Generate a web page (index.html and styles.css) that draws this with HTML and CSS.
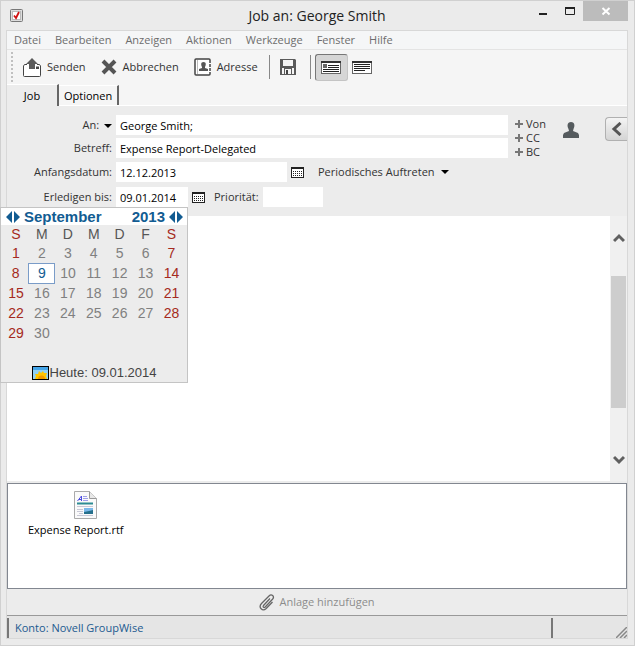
FILE: index.html
```html
<!DOCTYPE html>
<html lang="de">
<head>
  <meta charset="UTF-8">
  <title>Job an: George Smith</title>
  <link rel="stylesheet" href="styles.css">
</head>
<body>
<div class="window">
  <header class="titlebar">
    <svg class="app-icon" width="13" height="13" viewBox="0 0 13 13">
      <rect x=".5" y=".5" width="12" height="12" rx="1" fill="#ddd" stroke="#777"/>
      <rect x="2.5" y="2.5" width="8" height="8" fill="#fff" stroke="#bbb"/>
      <path d="M4 6.5l2 2.5 3-6" fill="none" stroke="#d01010" stroke-width="1.8"/>
    </svg>
    <h1>Job an: George Smith</h1>
    <div class="win-buttons">
      <button class="win-btn" aria-label="Minimieren"><svg width="12" height="12" viewBox="0 0 12 12"><path d="M2 9h8" stroke="#222" stroke-width="2"/></svg></button>
      <button class="win-btn" aria-label="Maximieren"><svg width="12" height="12" viewBox="0 0 12 12"><path d="M1.500 3v6.500h9V3" fill="none" stroke="#222"/><path d="M1 3h10" stroke="#222" stroke-width="2"/></svg></button>
      <button class="win-btn win-close" aria-label="Schließen"><svg width="10" height="10" viewBox="0 0 10 10"><path d="M1.500 2l7 6.500M8.500 2l-7 6.500" stroke="#fff" stroke-width="2"/></svg></button>
    </div>
  </header>

  <div class="frame">
    <nav class="menubar">
      <button>Datei</button>
      <button>Bearbeiten</button>
      <button>Anzeigen</button>
      <button>Aktionen</button>
      <button>Werkzeuge</button>
      <button>Fenster</button>
      <button>Hilfe</button>
    </nav>

    <div class="toolbar">
      <span class="grip"></span>
      <button class="tool">
        <svg width="18" height="20" viewBox="0 0 18 20">
          <path d="M4 7.500H1.500L.5 9v9.500q0 1 1 1h15q1 0 1-1V9l-1-1.500H14" fill="#fff" stroke="#444"/>
          <path d="M9 1L3 7h3v5h6V7h3z" fill="#5a5a5a"/>
          <path d="M13 9.500h3v2.500h-3z" fill="#444"/>
        </svg>
        Senden
      </button>
      <button class="tool">
        <svg width="16" height="16" viewBox="0 0 16 16"><path d="M2 2l12 12M14 2L2 14" stroke="#555" stroke-width="4"/></svg>
        Abbrechen
      </button>
      <button class="tool">
        <svg width="17" height="18" viewBox="0 0 17 18">
          <rect x="1" y="1" width="15" height="16" rx="1" fill="#fff" stroke="#444" stroke-width="1.500"/>
          <path d="M3.500 2v14" stroke="#bbb"/>
          <path d="M9.500 4c3 0 2.500 3 1.500 5v1l3 1v2H5v-2l3-1V9C7 7 6.500 4 9.500 4z" fill="#555"/>
          <path d="M16 5v1M16 9v1M16 13v1" stroke="#fff" stroke-width="2"/>
        </svg>
        Adresse
      </button>
      <span class="tool-sep"></span>
      <button class="tool tool-icon" aria-label="Speichern">
        <svg width="16" height="16" viewBox="0 0 16 16">
          <path d="M0 0h15l1 1v15H0z" fill="#5a5a5a"/>
          <path d="M3 1h10v6H3zM2 9h12v6H2z" fill="#f5f5f5"/>
          <path d="M4 9h8v7H4z" fill="#5a5a5a"/>
          <path d="M5 10h6v5H5z" fill="#f5f5f5"/>
          <path d="M6 11h2v4H6z" fill="#444"/>
        </svg>
      </button>
      <span class="tool-sep"></span>
      <button class="tool tool-icon tool-active" aria-label="HTML-Ansicht">
        <svg width="20" height="13" viewBox="0 0 20 13">
          <rect x=".5" y=".5" width="19" height="12" fill="#fff" stroke="#666"/>
          <path d="M0 1h20" stroke="#333" stroke-width="2"/>
          <path d="M2 3h4v4H2z" fill="#666"/>
          <path d="M7 4.500h11M7 6.500h11M2 8.500h16M2 10.500h16" stroke="#222"/>
        </svg>
      </button>
      <button class="tool tool-icon" aria-label="Textansicht">
        <svg width="20" height="13" viewBox="0 0 20 13">
          <rect x=".5" y=".5" width="19" height="12" fill="#fff" stroke="#666"/>
          <path d="M0 1h20" stroke="#333" stroke-width="2"/>
          <path d="M2 3.500h16M2 5.500h16M2 7.500h16M2 9.500h11" stroke="#222"/>
        </svg>
      </button>
    </div>

    <div class="tabs" role="tablist">
      <button class="tab tab-active" role="tab" aria-selected="true">Job</button>
      <button class="tab" role="tab" aria-selected="false">Optionen</button>
    </div>

    <main class="job">
      <form class="fields">
        <div class="people">
          <div class="people-fields">
            <div class="row">
              <label for="to">An: <i class="caret"></i></label>
              <input id="to" type="text" value="George Smith;">
            </div>
            <div class="row">
              <label for="subject">Betreff:</label>
              <input id="subject" type="text" value="Expense Report-Delegated">
            </div>
          </div>
          <div class="add-list">
            <button type="button"><i class="plus"></i>Von</button>
            <button type="button"><i class="plus"></i>CC</button>
            <button type="button"><i class="plus"></i>BC</button>
          </div>
          <svg class="person" width="16" height="16" viewBox="0 0 16 16"><path d="M8 0c4 0 4 4 2.500 7L10 9l5 2 1 2v3H0v-3l1-2 5-2-.5-2C4 4 4 0 8 0z" fill="#555b5e"/></svg>
          <button type="button" class="collapse" aria-label="Einblenden">
            <svg width="11" height="14" viewBox="0 0 11 14"><path d="M9.500 1L3 7l6.500 6" fill="none" stroke="#555" stroke-width="3"/></svg>
          </button>
        </div>

        <div class="dates">
          <div class="row">
            <label for="start">Anfangsdatum:</label>
            <input id="start" class="start" type="text" value="12.12.2013">
            <button type="button" class="cal-btn" aria-label="Kalender">
              <svg width="13" height="11" viewBox="0 0 13 11"><rect x=".5" y=".5" width="12" height="10" fill="#fff" stroke="#222"/><path d="M0 1.500h13" stroke="#222"/><path d="M2 4.500h9M2 6.500h9M2 8.500h9" stroke="#222" stroke-dasharray="1 1"/></svg>
            </button>
            <button type="button" class="recur">Periodisches Auftreten <i class="caret"></i></button>
          </div>
          <div class="row">
            <label for="due">Erledigen bis:</label>
            <div class="due">
              <input id="due" type="text" value="09.01.2014">
              <div class="calendar">
                <div class="cal-head">
                  <svg width="14" height="12" viewBox="0 0 14 12"><path d="M6 0v12L0 6zM8 0v12l6-6z" fill="#125c92"/></svg>
                  <strong>September</strong>
                  <strong class="year">2013</strong>
                  <svg width="14" height="12" viewBox="0 0 14 12"><path d="M6 0v12L0 6zM8 0v12l6-6z" fill="#125c92"/></svg>
                </div>
                <table>
                  <thead>
                    <tr><th>S</th><th>M</th><th>D</th><th>M</th><th>D</th><th>F</th><th>S</th></tr>
                  </thead>
                  <tbody>
                    <tr><td>1</td><td>2</td><td>3</td><td>4</td><td>5</td><td>6</td><td>7</td></tr>
                    <tr><td>8</td><td class="selected">9</td><td>10</td><td>11</td><td>12</td><td>13</td><td>14</td></tr>
                    <tr><td>15</td><td>16</td><td>17</td><td>18</td><td>19</td><td>20</td><td>21</td></tr>
                    <tr><td>22</td><td>23</td><td>24</td><td>25</td><td>26</td><td>27</td><td>28</td></tr>
                    <tr><td>29</td><td>30</td><td></td><td></td><td></td><td></td><td></td></tr>
                  </tbody>
                </table>
                <div class="today">
                  <svg width="17" height="14" viewBox="0 0 17 14">
                    <rect x=".5" y=".5" width="16" height="13" fill="#8fd0f5" stroke="#000"/>
                    <path d="M1 1h15v3H1z" fill="#45a5e8"/>
                    <path d="M3 13l1-3-1-2 3 0 1-3 2 2 2-2 1 2h3l-1 3 1 3z" fill="#ffc400"/>
                    <path d="M6 13a3.500 3.500 0 0 1 7 0z" fill="#f09a00"/>
                  </svg>
                  <span>Heute: 09.01.2014</span>
                </div>
              </div>
            </div>
            <button type="button" class="cal-btn" aria-label="Kalender">
              <svg width="13" height="11" viewBox="0 0 13 11"><rect x=".5" y=".5" width="12" height="10" fill="#fff" stroke="#222"/><path d="M0 1.500h13" stroke="#222"/><path d="M2 4.500h9M2 6.500h9M2 8.500h9" stroke="#222" stroke-dasharray="1 1"/></svg>
            </button>
            <label for="priority" class="priority-label">Priorität:</label>
            <input id="priority" class="priority" type="text">
          </div>
        </div>
      </form>

      <div class="message">
        <textarea aria-label="Nachricht"></textarea>
        <div class="scrollbar">
          <button aria-label="Nach oben"><svg width="12" height="10" viewBox="0 0 12 10"><path d="M1 8l5-5 5 5" fill="none" stroke="#606060" stroke-width="3"/></svg></button>
          <div class="track"><div class="thumb"></div></div>
          <button aria-label="Nach unten"><svg width="12" height="10" viewBox="0 0 12 10"><path d="M1 2l5 5 5-5" fill="none" stroke="#606060" stroke-width="3"/></svg></button>
        </div>
      </div>

      <div class="attachments">
        <div class="file">
          <svg width="24" height="28" viewBox="0 0 24 28">
            <path d="M.5.5h15l7 7v20H.5z" fill="#fafafa" stroke="#aaa"/>
            <path d="M15.500.5v7h7" fill="#e8e8e8" stroke="#999"/>
            <path d="M3.500 10l4-5v5M5 8.500h3" fill="none" stroke="#4a4ae0"/>
            <path d="M9 5.500h4M9 7.500h5M9 9.500h5" stroke="#a0a0e8"/>
            <path d="M3 12.500h16" stroke="#2c8c94" stroke-width="2"/>
            <path d="M3 15.500h16M3 18.500h6M3 20.500h6M5 22.500h4M3 24.500h16" stroke="#c8c8d6"/>
            <path d="M10 17h9v6h-9z" fill="#7ab8ea"/>
            <path d="M10 23v-2l5-1 4-1v4z" fill="#26708c"/>
          </svg>
          <span>Expense Report.rtf</span>
        </div>
      </div>

      <button class="add-file">
        <svg width="16" height="17" viewBox="0 0 16 17"><path d="M11 4.500l-6.500 7c-1 1.500.5 2.700 1.700 1.500l7.300-7.700c2.500-3-1-5.800-3.500-3.300L2.500 9.500c-3.500 4 1 8.500 4.700 5l6.300-6.500" fill="none" stroke="#666" stroke-width="1.300"/></svg>
        Anlage hinzufügen
      </button>
    </main>

    <footer class="status">
      <span class="account">Konto: Novell GroupWise</span>
      <span class="size-grip"><svg width="11" height="11" viewBox="0 0 11 11"><path d="M0 11L11 0M4 11l7-7M8 11l3-3" stroke="#888" stroke-width="1.500"/></svg></span>
    </footer>
  </div>
</div>
</body>
</html>
```

FILE: styles.css
```css
* {
  box-sizing: border-box;
}

body {
  margin: 0;
  background: #fff;
  color: #333;
  font: 11px/14px "Open Sans", "Noto Sans", sans-serif;
}

button, input, textarea {
  font: inherit;
  color: inherit;
  margin: 0;
  padding: 0;
  border: 0;
  border-radius: 0;
  background: none;
}

button {
  display: flex;
  align-items: center;
  white-space: nowrap;
}

svg {
  display: block;
  flex: none;
}

.window {
  display: flex;
  flex-direction: column;
  min-height: 100vh;
  margin-right: 1px;
  padding: 0 6px 6px 5px;
  background: #ebebeb;
  border: 1px solid #d0d0d0;
}

/* title bar */
.titlebar {
  display: grid;
  grid-template-columns: 1fr auto 1fr;
  height: 29px;
}

.app-icon {
  margin: 8px 4px;
}

.titlebar h1 {
  margin: 0;
  font-size: 14px;
  font-weight: 400;
  line-height: 29px;
  color: #222;
}

.win-buttons {
  display: flex;
  justify-content: flex-end;
  height: 20px;
}

.win-btn {
  justify-content: center;
  width: 27px;
}

.win-close {
  width: 45px;
  background: #bcbcbc;
}

.frame {
  flex: 1;
  display: flex;
  flex-direction: column;
  border: 1px solid #d8d8d8;
  background: #ececec;
}

/* menu and toolbar */
.menubar {
  display: flex;
  gap: 14px;
  height: 19px;
  padding: 0 7px;
  background: #f5f6f7;
  border-bottom: 1px solid #e4e4e4;
  color: #6d6d6d;
}

.toolbar {
  display: flex;
  align-items: center;
  height: 34px;
  padding-left: 4px;
  background: #f5f5f5;
}

.grip {
  height: 30px;
  margin-right: 10px;
  border-left: 2px dotted #c0c0c0;
}

.tool {
  gap: 6px;
  margin-right: 15px;
}

.tool-sep {
  height: 24px;
  margin-left: -4px;
  border-left: 1px solid #888;
}

.tool-icon {
  justify-content: center;
  width: 28px;
  height: 27px;
  margin: 0 12px 0 4px;
}

.tool-active {
  width: 33px;
  margin-right: 0;
  background: #d6d6d6;
  border: 1px solid #c4c4c4;
  border-top-color: #777;
  border-left-color: #777;
  border-radius: 3px;
}

.tool-active + .tool-icon {
  margin-left: 0;
}

.tabs {
  display: flex;
  align-items: flex-end;
  height: 22px;
  background: #f5f5f5;
  border-bottom: 1px solid #fff;
  color: #000;
}

.tab {
  justify-content: center;
  height: 20px;
  padding: 0 5px;
  border-top: 1px solid #fff;
  border-right: 2px solid #666;
}

.tab-active {
  width: 52px;
  height: 22px;
  margin-bottom: -1px;
  background: #ececec;
}

/* job form */
.job {
  flex: 1;
  display: flex;
  flex-direction: column;
}

.fields {
  display: flex;
  flex-direction: column;
  gap: 3px;
  padding: 9px 0;
}

.people {
  display: flex;
}

.people-fields {
  flex: 1;
  display: flex;
  flex-direction: column;
  gap: 3px;
}

.dates {
  display: flex;
  flex-direction: column;
  gap: 5px;
}

.row {
  display: flex;
  align-items: center;
  height: 20px;
}

.row label:first-child {
  width: 109px;
  padding-right: 4px;
  text-align: right;
}

.row input {
  flex: 1;
  min-width: 0;
  height: 20px;
  padding: 0 4px;
  background: #fff;
  color: #000;
}

.row .start {
  flex: none;
  width: 171px;
}

.row .priority {
  flex: none;
  width: 60px;
}

.caret {
  display: inline-block;
  margin-left: 2px;
  border: 4px solid transparent;
  border-top-color: #000;
  border-bottom: 0;
  vertical-align: middle;
}

.add-list {
  width: 55px;
  padding: 2px 0 0 7px;
}

.add-list button {
  gap: 3px;
  height: 14px;
}

.plus {
  width: 8px;
  height: 8px;
  background:
    linear-gradient(#777, #777) center / 8px 2px no-repeat,
    linear-gradient(#777, #777) center / 2px 8px no-repeat;
}

.person {
  margin-top: 7px;
}

.collapse {
  justify-content: center;
  width: 22px;
  height: 24px;
  margin: 2px 0 0 26px;
  background: linear-gradient(#f4f4f4, #d4d4d4);
  border: 1px solid #b0b0b0;
  border-right: 0;
  border-radius: 4px 0 0 4px;
}

.cal-btn {
  margin: 0 14px 0 4px;
}

.recur {
  gap: 4px;
}

.due {
  position: relative;
  display: flex;
  width: 72px;
}

.priority-label {
  margin: 0 4px 0 -5px;
}

/* date picker */
.calendar {
  position: absolute;
  top: 100%;
  right: 0;
  z-index: 1;
  width: 188px;
  height: 176px;
  background: #ececec;
  border: 1px solid #c4c4c4;
  font-family: "Liberation Sans", Arial, sans-serif;
  font-size: 14px;
}

.cal-head {
  display: flex;
  align-items: center;
  gap: 4px;
  height: 17px;
  padding: 0 4px 0 5px;
  background: #fff;
  color: #125c92;
  font-size: 15px;
}

.cal-head .year {
  margin-left: auto;
}

.calendar table {
  width: 182px;
  margin-left: 2px;
  table-layout: fixed;
  border-collapse: collapse;
}

.calendar th,
.calendar td {
  height: 20px;
  padding: 0;
  text-align: center;
  font-weight: 400;
  color: #808080;
}

.calendar th {
  height: 18px;
  color: #555;
}

.calendar tr > :first-child,
.calendar tr > :last-child {
  color: #a52a20;
}

.calendar .selected {
  background: #fff;
  border: 1px solid #7a9cc8;
  color: #125c92;
}

.today {
  display: flex;
  align-items: center;
  justify-content: center;
  gap: 1px;
  margin-top: 23px;
  color: #444;
  font-size: 13px;
}

/* message body */
.message {
  flex: 1;
  display: flex;
  min-height: 160px;
  background: #fff;
}

.message textarea {
  flex: 1;
  resize: none;
  outline: 0;
}

.scrollbar {
  display: flex;
  flex-direction: column;
  width: 17px;
  background: #f0f0f0;
}

.scrollbar button {
  justify-content: center;
  height: 43px;
}

.track {
  flex: 1;
  padding: 17px 1px 30px;
}

.thumb {
  height: 100%;
  background: #cdcdcd;
}

/* attachments */
.attachments {
  height: 106px;
  margin-top: 2px;
  padding: 7px 20px;
  background: #fff;
  border: 1px solid #828790;
  color: #000;
}

.file {
  display: inline-flex;
  flex-direction: column;
  align-items: center;
  gap: 4px;
}

.file svg {
  margin-left: 20px;
}

.add-file {
  align-self: center;
  gap: 4px;
  height: 26px;
  color: #8c8c8c;
}

.status {
  display: flex;
  height: 23px;
  padding-top: 2px;
  background: #e5e5e5;
  border-top: 1px solid #999;
  color: #1c5a90;
}

.account {
  flex: 1;
  padding-left: 6px;
  border-left: 2px solid #777;
  line-height: 20px;
}

.size-grip {
  display: flex;
  justify-content: flex-end;
  align-items: flex-end;
  width: 76px;
  border-left: 2px solid #777;
}
```
